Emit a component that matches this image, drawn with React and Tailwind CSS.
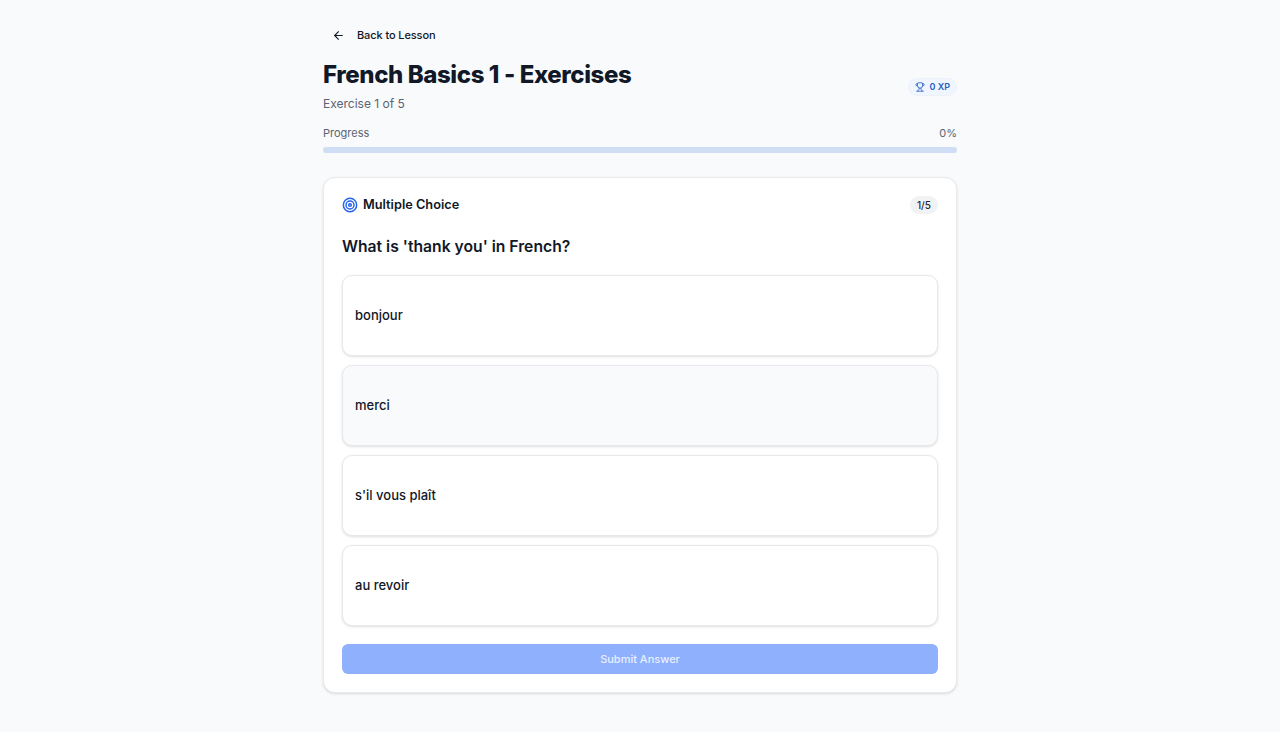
import React, { useState } from "react";
import { ArrowLeft, Trophy, Target } from "lucide-react";

const options = ["bonjour", "merci", "s'il vous plaît", "au revoir"];

export default function App() {
  const [selected, setSelected] = useState(null);

  return (
    <div className="min-h-screen bg-[#f9fafc] font-['Inter',sans-serif] text-[#0f172a]">
      <div className="mx-auto w-[634px] pt-6">
        {/* Back link */}
        <button className="flex h-[22px] items-center gap-[12px] pl-[9px] text-[11px] font-medium tracking-[-0.1px] text-[#111827]">
          <ArrowLeft className="h-[13px] w-[13px]" strokeWidth={2} />
          Back to Lesson
        </button>

        {/* Title */}
        <div className="mt-[13px] flex items-center justify-between">
          <div>
            <h1 className="text-[24px] leading-[32px] font-extrabold tracking-[-0.4px] text-[#111827]">
              French Basics 1 - Exercises
            </h1>
            <p className="mt-[3px] text-[12px] leading-[20px] text-[#5b6472]">Exercise 1 of 5</p>
          </div>
          <div className="flex h-[18px] items-center gap-[5px] rounded-full border border-[#eef2f8] bg-[#eff6ff] px-[6px] text-[9px] font-semibold text-[#2b5fc0]">
            <Trophy className="h-[10px] w-[10px]" strokeWidth={2} />
            0 XP
          </div>
        </div>

        {/* Progress */}
        <div className="mt-[11px] flex justify-between text-[11px] leading-[16px] text-[#5b6472]">
          <span>Progress</span>
          <span>0%</span>
        </div>
        <div className="mt-[6px] h-[6px] rounded-full bg-[#d0def5]"></div>

        {/* Exercise card */}
        <div className="mt-[24px] rounded-[12px] border border-[#e8eaee] bg-white px-[18px] pt-[17px] pb-[18px] shadow-sm">
          <div className="flex h-[20px] items-center justify-between">
            <div className="flex items-center gap-[5px]">
              <Target className="h-[16px] w-[16px] text-[#2563eb]" strokeWidth={2.2} />
              <span className="text-[12.75px] font-semibold text-[#111827]">Multiple Choice</span>
            </div>
            <span className="flex h-[18px] items-center rounded-full bg-[#f1f2f4] px-[7px] text-[10px] font-medium text-[#1f2937]">
              1/5
            </span>
          </div>

          <h2 className="mt-[20px] text-[15.7px] leading-[24px] font-semibold text-[#111827]">
            What is 'thank you' in French?
          </h2>

          <div className="mt-[16px] flex flex-col gap-[9px]">
            {options.map((option, i) => (
              <button
                key={option}
                onClick={() => setSelected(i)}
                className={`flex h-[81px] items-center rounded-[10px] border border-[#e6e8ec] px-[12px] text-left text-[13px] font-medium text-[#111827] shadow-sm ${
                  i === 1 || selected === i ? "bg-[#f9fafb]" : "bg-white"
                }`}
              >
                {option}
              </button>
            ))}
          </div>

          <button
            disabled
            className="mt-[18px] h-[30px] w-full rounded-[6px] bg-[#8fb0fd] text-center text-[11px] font-medium text-[#e8efff]"
          >
            Submit Answer
          </button>
        </div>
      </div>
    </div>
  );
}
